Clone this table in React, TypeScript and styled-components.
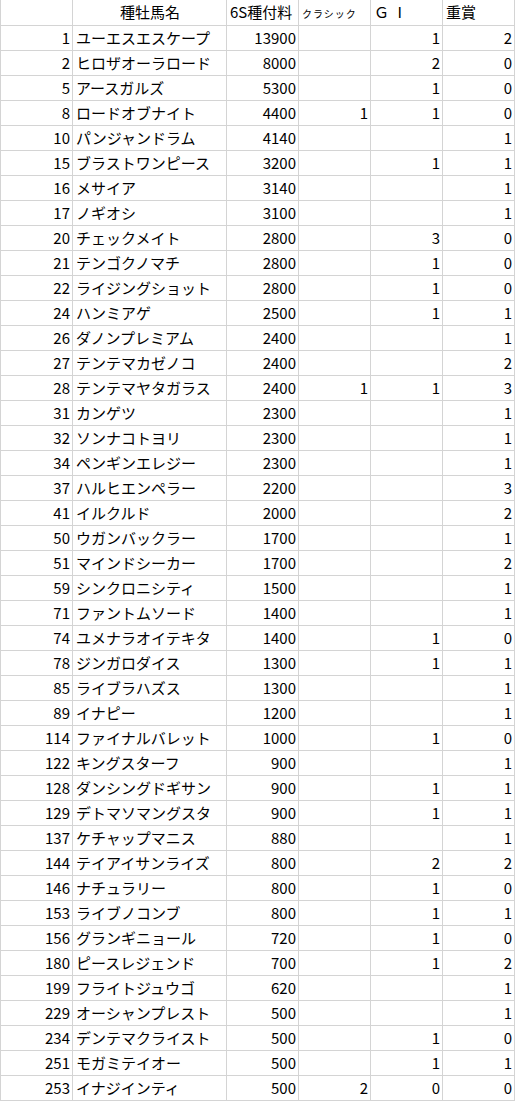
import React from "react";
import styled, { createGlobalStyle } from "styled-components";

const Global = createGlobalStyle`
  html, body { margin: 0; padding: 0; background: #ffffff; }
  body { font-family: "Noto Sans CJK JP", "Noto Sans", sans-serif; color: #000; }
`;

const Sheet = styled.div`
  display: flex;
  flex-direction: column;
  gap: 1px;
  width: 515px;
  box-sizing: border-box;
  padding: 0 1px 1px 1px;
  background: #d4d4d4;
`;

const Row = styled.div<{ $head?: boolean }>`
  display: grid;
  grid-template-columns: 71px 153px 71px 71px 71px 71px;
  column-gap: 1px;
  height: ${(p) => (p.$head ? 25 : 24)}px;
`;

const Cell = styled.div<{ $align?: "left" | "right" | "center" }>`
  background: #ffffff;
  font-size: 15px;
  line-height: 24px;
  white-space: nowrap;
  overflow: hidden;
  text-align: ${(p) => p.$align || "left"};
  padding: 0 2px 0 3px;
`;

const Small = styled.span`
  font-size: 10px;
  letter-spacing: 1px;
`;

type R = [number, string, number, string, string, string];

const rows: R[] = [
  [1, "ユーエスエスケープ", 13900, "", "1", "2"],
  [2, "ヒロザオーラロード", 8000, "", "2", "0"],
  [5, "アースガルズ", 5300, "", "1", "0"],
  [8, "ロードオブナイト", 4400, "1", "1", "0"],
  [10, "パンジャンドラム", 4140, "", "", "1"],
  [15, "ブラストワンピース", 3200, "", "1", "1"],
  [16, "メサイア", 3140, "", "", "1"],
  [17, "ノギオシ", 3100, "", "", "1"],
  [20, "チェックメイト", 2800, "", "3", "0"],
  [21, "テンゴクノマチ", 2800, "", "1", "0"],
  [22, "ライジングショット", 2800, "", "1", "0"],
  [24, "ハンミアゲ", 2500, "", "1", "1"],
  [26, "ダノンプレミアム", 2400, "", "", "1"],
  [27, "テンテマカゼノコ", 2400, "", "", "2"],
  [28, "テンテマヤタガラス", 2400, "1", "1", "3"],
  [31, "カンゲツ", 2300, "", "", "1"],
  [32, "ソンナコトヨリ", 2300, "", "", "1"],
  [34, "ペンギンエレジー", 2300, "", "", "1"],
  [37, "ハルヒエンペラー", 2200, "", "", "3"],
  [41, "イルクルド", 2000, "", "", "2"],
  [50, "ウガンバックラー", 1700, "", "", "1"],
  [51, "マインドシーカー", 1700, "", "", "2"],
  [59, "シンクロニシティ", 1500, "", "", "1"],
  [71, "ファントムソード", 1400, "", "", "1"],
  [74, "ユメナラオイテキタ", 1400, "", "1", "0"],
  [78, "ジンガロダイス", 1300, "", "1", "1"],
  [85, "ライブラハズス", 1300, "", "", "1"],
  [89, "イナピー", 1200, "", "", "1"],
  [114, "ファイナルバレット", 1000, "", "1", "0"],
  [122, "キングスターフ", 900, "", "", "1"],
  [128, "ダンシングドギサン", 900, "", "1", "1"],
  [129, "デトマソマングスタ", 900, "", "1", "1"],
  [137, "ケチャップマニス", 880, "", "", "1"],
  [144, "テイアイサンライズ", 800, "", "2", "2"],
  [146, "ナチュラリー", 800, "", "1", "0"],
  [153, "ライブノコンブ", 800, "", "1", "1"],
  [156, "グランギニョール", 720, "", "1", "0"],
  [180, "ピースレジェンド", 700, "", "1", "2"],
  [199, "フライトジュウゴ", 620, "", "", "1"],
  [229, "オーシャンプレスト", 500, "", "", "1"],
  [234, "デンテマクライスト", 500, "", "1", "0"],
  [251, "モガミテイオー", 500, "", "1", "1"],
  [253, "イナジインティ", 500, "2", "0", "0"],
];

export default function App() {
  return (
    <>
      <Global />
      <Sheet>
        <Row $head>
          <Cell />
          <Cell $align="center">種牡馬名</Cell>
          <Cell>6S種付料</Cell>
          <Cell>
            <Small>クラシック</Small>
          </Cell>
          <Cell>Ｇ Ⅰ</Cell>
          <Cell>重賞</Cell>
        </Row>
        {rows.map((r) => (
          <Row key={r[0]}>
            <Cell $align="right">{r[0]}</Cell>
            <Cell>{r[1]}</Cell>
            <Cell $align="right">{r[2]}</Cell>
            <Cell $align="right">{r[3]}</Cell>
            <Cell $align="right">{r[4]}</Cell>
            <Cell $align="right">{r[5]}</Cell>
          </Row>
        ))}
      </Sheet>
    </>
  );
}
